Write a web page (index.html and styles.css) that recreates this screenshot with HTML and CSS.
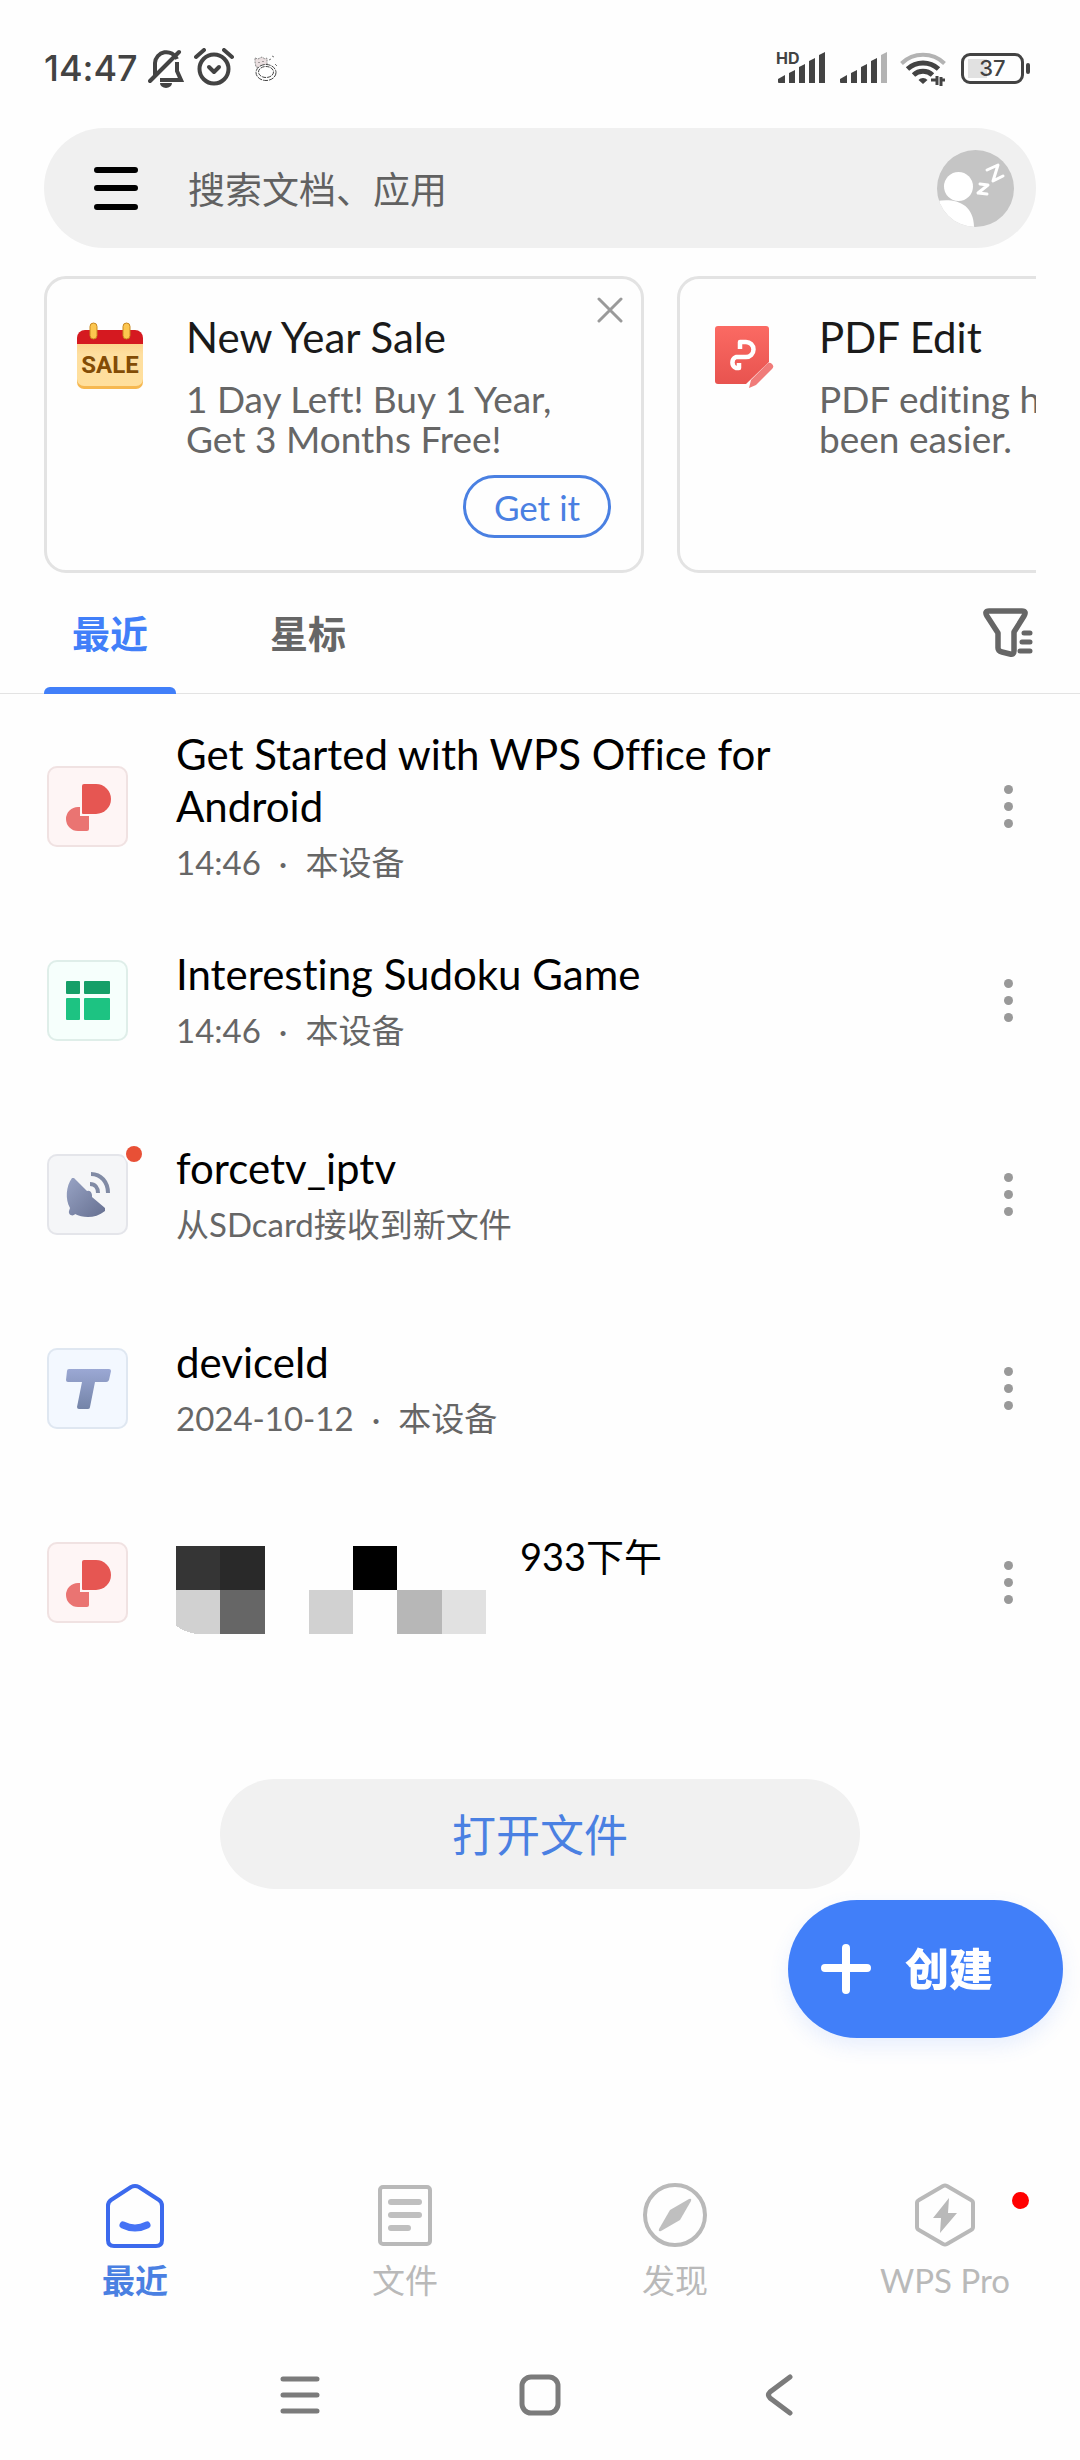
FILE: index.html
```html
<!DOCTYPE html>
<html lang="zh-CN">
<head>
<meta charset="utf-8">
<meta name="viewport" content="width=device-width, initial-scale=1">
<title>WPS Office</title>
<link rel="stylesheet" href="styles.css">
</head>
<body>
<svg class="defs" aria-hidden="true">
  <defs>
    <linearGradient id="dish" x1="0" y1="0" x2="1" y2="1"><stop offset="0" stop-color="#98a3c4"/><stop offset="1" stop-color="#667091"/></linearGradient>
    <linearGradient id="tee" x1="0" y1="0" x2="0" y2="1"><stop offset="0" stop-color="#9ba8d4"/><stop offset="1" stop-color="#7484a8"/></linearGradient>
    <linearGradient id="cal" x1="0" y1="0" x2="0" y2="1"><stop offset="0" stop-color="#fdd188"/><stop offset=".3" stop-color="#fedfa0"/><stop offset="1" stop-color="#ffdf9c"/></linearGradient>
    <linearGradient id="pdf" x1="0" y1="0" x2="0" y2="1"><stop offset="0" stop-color="#fb6a63"/><stop offset="1" stop-color="#e8534f"/></linearGradient>
    <symbol id="p-logo" viewBox="0 0 81 81">
      <path d="M37 18h12a15 15 0 0 1 0 30H36a1 1 0 0 1-1-1V20a2 2 0 0 1 2-2z" fill="#e65652"/>
      <path d="M33 41v9h9v13a2 2 0 0 1-2 2h-9a12 12 0 0 1 0-24z" fill="#ea7472"/>
    </symbol>
  </defs>
</svg>
<div class="app">
  <header class="status">
    <div class="status-side">
      <span class="clock">14:47</span>
      <svg class="bell" viewBox="0 0 36 40"><path d="M7 28V15a11.500 11.500 0 0 1 22-4M29 14v9l4 9H12" fill="none" stroke="#434343" stroke-width="4"/><path d="M2 33 31 4" stroke="#434343" stroke-width="4" stroke-linecap="round"/><path d="M12 35h12a6 5 0 0 1-12 0z" fill="#434343"/></svg>
      <svg class="alarm" viewBox="0 0 40 40"><g fill="none" stroke="#434343" stroke-linecap="round"><circle cx="20" cy="21" r="14.500" stroke-width="4"/><path d="m2 9 8-7M38 9l-8-7" stroke-width="4"/><path d="m15 19 5 5 5-5" stroke-width="4" stroke-linejoin="round"/></g></svg>
      <svg class="pet" viewBox="0 0 24 26"><path d="m1 3 3 1 4-2 3 2 2-1v7l-5 3-6-1-1-5z" fill="#eadfe0" stroke="#888" stroke-dasharray="2 1"/><path d="M5 7v1m4-2v1" stroke="#555"/><ellipse cx="12" cy="17.500" rx="10" ry="8" fill="#fff" stroke="#444" stroke-dasharray="5 1"/><ellipse cx="12" cy="17" rx="7.500" ry="5.500" fill="none" stroke="#444" stroke-dasharray="4 1"/><path d="m15 5 2-1m1-3 2 1m1 7 2 2" stroke="#777"/></svg>
    </div>
    <div class="status-side">
      <svg class="signal" viewBox="0 0 50 34"><text x="0" y="13" class="hd">HD</text><path d="M2 28l7-4v8H3a1 1 0 0 1-1-1zM13 22l6-3v13h-6zM23 16l6-3v19h-6zM33 10l6-3v25h-6zM43 4l6-3v31h-6z" fill="#434343"/></svg>
      <svg class="signal" viewBox="0 0 50 34"><path d="M2 28l7-4v8H3a1 1 0 0 1-1-1zM13 22l6-3v13h-6zM23 16l6-3v19h-6zM33 10l6-3v25h-6z" fill="#434343"/><path d="M43 4l6-3v31h-6z" fill="#b3b3b3"/></svg>
      <svg class="wifi" viewBox="0 0 46 36"><g fill="none" stroke-width="4"><path d="M1.500 13.500a31 31 0 0 1 43 0" stroke="#b3b3b3"/><path d="M7.500 19a23 23 0 0 1 31 0M13.500 25a14 14 0 0 1 19 0" stroke="#434343" stroke-width="5"/></g><path d="M23 34l-4.500-4a6 6 0 0 1 9 0z" fill="#434343"/><path d="M31 30h5m1-4v9M41 36v-9m0 3h4" stroke="#434343" stroke-width="3"/></svg>
      <div class="battery"><span>37</span></div>
    </div>
  </header>

  <form class="search" role="search">
    <button class="plain" type="button" aria-label="菜单"><svg width="44" height="44" viewBox="0 0 44 44"><path d="M3 4h38M3 22h38M3 41h38" stroke="#000" stroke-width="6" stroke-linecap="round"/></svg></button>
    <input class="search-input" type="text" placeholder="搜索文档、应用" aria-label="搜索文档、应用">
    <button class="plain" type="button" aria-label="账号"><svg width="77" height="77" viewBox="0 0 77 77"><clipPath id="av"><circle cx="38.500" cy="38.500" r="38.500"/></clipPath><g clip-path="url(#av)"><path d="M0 0h77v77H0z" fill="#c5c5c5"/><circle cx="21.500" cy="36.500" r="14.500" fill="#fff"/><path d="M0 51c18-3 37 2 37 27H0z" fill="#fff"/><path d="m50 20 11-5-5 16 10-5M43 34l8 1-10 8 9 1" fill="none" stroke="#fff" stroke-width="3" stroke-linejoin="round" stroke-linecap="round"/></g></svg></button>
  </form>

  <section class="promos">
    <article class="promo">
      <svg class="promo-icon" viewBox="0 0 66 68"><rect y="20" width="66" height="47" rx="7" fill="#f6b850"/><path d="M0 19h66v38a7 7 0 0 1-7 7H7a7 7 0 0 1-7-7z" fill="url(#cal)"/><path d="M8 8h50a8 8 0 0 1 8 8v6H0v-6a8 8 0 0 1 8-8z" fill="#d51920"/><g fill="#fcc64f" stroke="#c8871f"><rect x="13" y="1" width="7" height="16" rx="3.500"/><rect x="46" y="1" width="7" height="16" rx="3.500"/></g><text x="33" y="51" class="sale">SALE</text></svg>
      <div class="promo-body">
        <h2>New Year Sale</h2>
        <p>1 Day Left! Buy 1 Year,<br>Get 3 Months Free!</p>
        <button class="get" type="button">Get it</button>
      </div>
      <button class="plain close" type="button" aria-label="关闭"><svg width="26" height="26" viewBox="0 0 26 26"><path d="m2 2 22 22M24 2 2 24" stroke="#9a9a9a" stroke-width="3" stroke-linecap="round"/></svg></button>
    </article>
    <article class="promo">
      <svg class="promo-icon" viewBox="0 0 66 68"><path d="M8 4h48a3 3 0 0 1 3 3v33L36 62H8a3 3 0 0 1-3-3V7a3 3 0 0 1 3-3z" fill="url(#pdf)"/><path d="M30 27v-7h6a7 7 0 0 1 0 15H26a6 6 0 0 0 0 11h3v-5" fill="none" stroke="#fff" stroke-width="4.500" stroke-linejoin="round"/><path d="M39 66l2-8 16-16a3 3 0 0 1 5 5L46 63z" fill="#f07b79"/></svg>
      <div class="promo-body">
        <h2>PDF Edit</h2>
        <p>PDF editing has never<br>been easier.</p>
      </div>
    </article>
  </section>

  <nav class="tabs">
    <button class="tab active" type="button">最近</button>
    <button class="tab" type="button">星标</button>
    <button class="plain filter" type="button" aria-label="筛选"><svg width="50" height="50" viewBox="0 0 50 50"><path d="M6 3h33q5 0 2 5L31 24v19q0 4-4 3l-8-2q-4-1-4-4V25L4 8Q1 3 6 3z" fill="none" stroke="#666" stroke-width="5.500" stroke-linejoin="round"/><path d="M41 25h6M39 34h8M37 43h10" stroke="#666" stroke-width="5" stroke-linecap="round"/></svg></button>
  </nav>

  <main>
    <ul class="files">
      <li class="file">
        <span class="thumb red"><svg viewBox="0 0 81 81"><use href="#p-logo"/></svg></span>
        <div class="info"><h3>Get Started with WPS Office for Android</h3><p>14:46<span class="sep">·</span>本设备</p></div>
        <button class="plain more" type="button" aria-label="更多"><i></i><i></i><i></i></button>
      </li>
      <li class="file">
        <span class="thumb green"><svg viewBox="0 0 81 81"><g fill="#159f68"><rect x="19" y="21" width="14" height="13" rx="1"/><rect x="37" y="21" width="26" height="13" rx="1"/></g><g fill="#1dc382"><rect x="19" y="38" width="14" height="22" rx="1"/><rect x="37" y="38" width="26" height="22" rx="1"/></g></svg></span>
        <div class="info"><h3>Interesting Sudoku Game</h3><p>14:46<span class="sep">·</span>本设备</p></div>
        <button class="plain more" type="button" aria-label="更多"><i></i><i></i><i></i></button>
      </li>
      <li class="file">
        <span class="thumb gray"><svg viewBox="0 0 81 81"><path d="M27 24 40 37q4-1 5 4 0 1 0 2L58 54v3c-10 8-22 7-30 3-2 3-7 1-6-3l1-3c-5-9-4-22 2-30z" fill="url(#dish)"/><path d="M44 20c10 0 17 8 17 19M43 30c5 0 8 4 8 9" fill="none" stroke="#818ba5" stroke-width="4"/></svg><b class="dot"></b></span>
        <div class="info"><h3>forcetv_iptv</h3><p>从SDcard接收到新文件</p></div>
        <button class="plain more" type="button" aria-label="更多"><i></i><i></i><i></i></button>
      </li>
      <li class="file">
        <span class="thumb blue"><svg viewBox="0 0 81 81"><path d="M22 21h40a2 2 0 0 1 2 2l-2 9a3 3 0 0 1-3 2H48l-5 25a2 2 0 0 1-2 2h-9a2 2 0 0 1-2-2l5-25H21a2 2 0 0 1-2-2l1-9a2 2 0 0 1 2-2z" fill="url(#tee)"/></svg></span>
        <div class="info"><h3>deviceId</h3><p>2024-10-12<span class="sep">·</span>本设备</p></div>
        <button class="plain more" type="button" aria-label="更多"><i></i><i></i><i></i></button>
      </li>
      <li class="file">
        <span class="thumb red"><svg viewBox="0 0 81 81"><use href="#p-logo"/></svg></span>
        <div class="info masked"><svg class="mosaic" viewBox="0 0 310 88" shape-rendering="crispEdges"><path d="M0 0h44v44H0z" fill="#353535"/><path d="M44 0h45v44H44z" fill="#292929"/><path d="M0 44h44v44H24Q12 88 0 80z" fill="#d1d1d1"/><path d="M44 44h45v44H44z" fill="#666"/><path d="M133 44h44v44h-44z" fill="#d1d1d1"/><path d="M177 0h44v44h-44z" fill="#000"/><path d="M221 44h45v44h-45z" fill="#b7b7b7"/><path d="M266 44h44v44h-44z" fill="#e1e1e1"/></svg><h3>933下午</h3></div>
        <button class="plain more" type="button" aria-label="更多"><i></i><i></i><i></i></button>
      </li>
    </ul>
    <button class="open" type="button">打开文件</button>
  </main>

  <nav class="bottom">
    <a class="item active" href="#recent"><svg viewBox="0 0 66 66"><path d="M29 5q4-2 8 0l20 13q3 2 3 6v34q0 6-6 6H12q-6 0-6-6V24q0-4 3-6z" fill="none" stroke="#3c6aed" stroke-width="4"/><path d="M21 43q12 6 24 0" fill="none" stroke="#4673f5" stroke-width="7" stroke-linecap="round"/></svg><span>最近</span></a>
    <a class="item" href="#files"><svg viewBox="0 0 66 66"><rect x="8" y="5" width="50" height="57" rx="3" fill="none" stroke="#b9b9b9" stroke-width="4"/><path d="M19 20h28M19 33h28M19 46h17" stroke="#bfbfbf" stroke-width="6" stroke-linecap="round"/></svg><span>文件</span></a>
    <a class="item" href="#discover"><svg viewBox="0 0 66 66"><circle cx="33" cy="33" r="30" fill="none" stroke="#b9b9b9" stroke-width="4"/><path d="M47 17q3-1 2 2L38 38 19 49q-3 1-2-2l11-19z" fill="#bfbfbf"/></svg><span>发现</span></a>
    <a class="item" href="#pro"><svg viewBox="0 0 66 66"><path d="M31 4q2-1 4 0l24 14q2 1 2 3v24q0 2-2 3L35 62q-2 1-4 0L7 48q-2-1-2-3V21q0-2 2-3z" fill="none" stroke="#b9b9b9" stroke-width="4"/><path d="m37 16-16 20h8l-1 15 17-20h-9z" fill="#b9b9b9"/></svg><span>WPS Pro</span><b class="badge"></b></a>
  </nav>
  <nav class="system">
    <button class="plain" type="button" aria-label="最近任务"><svg width="42" height="42" viewBox="0 0 42 42"><path d="M4 5h34M4 21h34M4 37h34" stroke="#7b7b7b" stroke-width="5" stroke-linecap="round"/></svg></button>
    <button class="plain" type="button" aria-label="主屏幕"><svg width="42" height="42" viewBox="0 0 42 42"><rect x="3" y="3" width="36" height="36" rx="9" fill="none" stroke="#7b7b7b" stroke-width="5"/></svg></button>
    <button class="plain" type="button" aria-label="返回"><svg width="42" height="42" viewBox="0 0 42 42"><path d="M31 3 11 18q-3 3 0 6l20 15" fill="none" stroke="#7b7b7b" stroke-width="5" stroke-linecap="round"/></svg></button>
  </nav>
  <button class="fab" type="button"><svg width="50" height="50" viewBox="0 0 50 50"><path d="M25 4v42M4 24h42" stroke="#fff" stroke-width="8" stroke-linecap="round"/></svg><span>创建</span></button>
</div>
</body>
</html>
```
FILE: styles.css
```css
* { box-sizing: border-box; margin: 0; padding: 0; }
body { background: #fefefe; color: #000; font-family: Lato, "Noto Sans CJK SC", sans-serif; font-variant-ligatures: none; }
h2, h3 { font-weight: 400; }
button, input { font: inherit; color: inherit; background: none; border: 0; }
svg { display: block; flex: none; }
.defs { position: absolute; width: 0; height: 0; }
.plain { display: flex; flex: none; }
.app { display: flex; flex-direction: column; min-height: 100vh; }

.status { display: flex; justify-content: space-between; align-items: center; height: 128px; padding: 8px 50px 0 44px; color: #434343; }
.status-side { display: flex; align-items: center; gap: 12px; }
.status-side:first-child { gap: 10px; }
.clock { font-size: 36px; font-weight: 500; font-family: Inter, sans-serif; line-height: 44px; }
.bell { width: 36px; height: 40px; }
.alarm { width: 40px; height: 40px; }
.pet { width: 24px; height: 26px; margin-left: 10px; }
.signal { width: 50px; height: 34px; overflow: visible; }
.hd { font: 700 16px Inter, sans-serif; fill: #434343; }
.wifi { width: 46px; height: 36px; margin-right: 3px; }
.battery { position: relative; display: flex; align-items: center; justify-content: center; width: 63px; height: 31px; margin-right: 6px; border: 3px solid #434343; border-radius: 9px; background: linear-gradient(#e1e1e1, #e1e1e1) 4px 3px / 19px 19px no-repeat; font: 500 22px/26px Inter, sans-serif; }
.battery::after { content: ""; position: absolute; right: -9px; top: 7px; width: 4px; height: 11px; border-radius: 2px; background: #434343; }

.search { display: flex; align-items: center; height: 120px; margin: 0 44px; padding: 0 22px 0 50px; border-radius: 60px; background: #f0f0f0; }
.search-input { flex: 1; min-width: 0; margin: 0 50px; padding-top: 3px; font-size: 37px; line-height: 54px; outline: 0; }
.search-input::placeholder { color: #616161; opacity: 1; }

.promos { display: flex; gap: 33px; margin: 28px 44px 0; overflow: hidden; }
.promo { position: relative; display: flex; flex: 0 0 600px; gap: 43px; height: 297px; padding: 32px 30px; border: 3px solid #e3e3e3; border-radius: 22px; }
.promo-icon { width: 66px; height: 68px; margin-top: 11px; }
.sale { font: 700 24px Roboto, sans-serif; fill: #834c05; text-anchor: middle; }
.promo-body { display: flex; flex: 1; flex-direction: column; }
.promo h2 { font-size: 42px; line-height: 52px; color: #1a1a1a; }
.promo p { margin-top: 16px; font-size: 37px; line-height: 40px; color: #666; white-space: nowrap; }
.get { align-self: flex-end; width: 148px; height: 66px; margin-top: 16px; border: 3px solid #4a80e2; border-radius: 33px; font-size: 35px; line-height: 44px; color: #4a80e2; }
.close { position: absolute; top: 18px; right: 18px; }

.tabs { display: flex; align-items: center; gap: 66px; height: 121px; padding: 0 47px 0 44px; border-bottom: 1px solid #e3e3e3; }
.tab { position: relative; align-self: stretch; width: 132px; padding-bottom: 3px; font-size: 38px; font-weight: 700; color: #666; }
.tab.active { color: #417ff9; }
.tab.active::after { content: ""; position: absolute; left: 0; right: 0; bottom: -1px; height: 7px; border-radius: 6px 6px 0 0; background: #417ff9; }
.filter { margin-left: auto; }

main { flex: 1; }
.files { padding: 15px 44px 0 47px; list-style: none; }
.file { display: flex; align-items: center; gap: 48px; height: 194px; }
.thumb { position: relative; flex: none; width: 81px; height: 81px; border-radius: 10px; }
.thumb svg { width: 81px; height: 81px; }
.red { background: #fef5f5; box-shadow: inset 0 0 0 2px #f0e2e2; }
.green { background: #f6fffc; box-shadow: inset 0 0 0 2px #dfeee9; }
.gray { background: #f5f6f8; box-shadow: inset 0 0 0 2px #e4e5ea; }
.blue { background: #f3f8ff; box-shadow: inset 0 0 0 2px #dfe7f1; }
.dot { position: absolute; top: -8px; right: -14px; width: 16px; height: 16px; border-radius: 50%; background: #e85036; box-shadow: 0 0 0 2px #fefefe; }
.info { flex: 1; max-width: 640px; }
.info h3 { font-size: 42px; line-height: 52px; }
.info p { margin-top: 8px; font-size: 33px; line-height: 44px; color: #666; }
.sep { margin: 0 18px; }
.info.masked { display: flex; gap: 34px; height: 104px; }
.info.masked h3 { font-size: 38px; }
.mosaic { align-self: flex-end; width: 310px; height: 88px; }
.more { flex-direction: column; align-items: center; gap: 8px; width: 56px; margin-left: auto; }
.more i { width: 9px; height: 9px; border-radius: 50%; background: #999; }
.open { display: block; width: 640px; max-width: 90%; height: 110px; margin: 100px auto 0; padding-bottom: 3px; border-radius: 55px; background: #f1f1f1; font-size: 44px; color: #4a80e2; }

.bottom { display: grid; grid-template-columns: repeat(4, 1fr); padding: 22px 0 28px; }
.item { position: relative; display: flex; flex-direction: column; align-items: center; gap: 10px; font-size: 33px; line-height: 44px; color: #b9b9b9; text-decoration: none; }
.item.active { font-weight: 700; color: #4a80e2; }
.item svg { width: 66px; height: 66px; }
.badge { position: absolute; top: 10px; right: 51px; width: 17px; height: 17px; border-radius: 50%; background: #f00; }
.system { display: flex; justify-content: center; align-items: center; gap: 198px; height: 130px; }
.fab { position: fixed; right: 17px; bottom: 422px; display: flex; align-items: center; gap: 34px; width: 275px; height: 138px; padding-left: 33px; border-radius: 69px; background: #417ff9; box-shadow: 0 8px 20px rgba(65, 127, 249, .12); font-size: 44px; font-weight: 900; color: #fff; }
.fab span { padding-bottom: 4px; }
```
